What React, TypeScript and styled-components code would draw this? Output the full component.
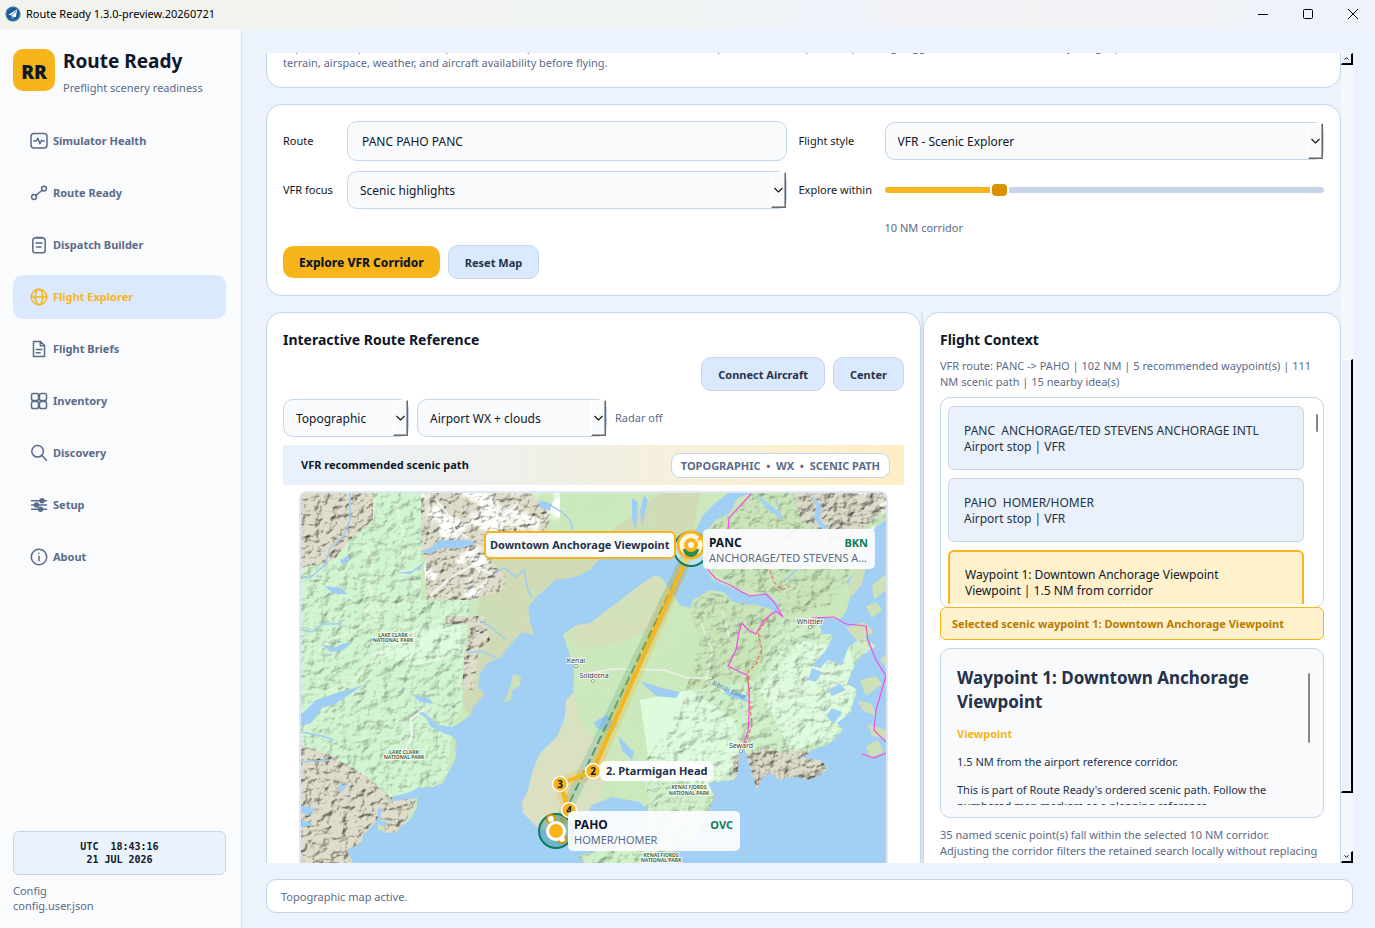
import React, { useState } from "react";
import styled, { createGlobalStyle } from "styled-components";

const amber = "#f7b51b";
const ink = "#0f1729";
const slate = "#24324a";
const muted = "#5b6b88";
const line = "#c5d5ea";
const canvas = "#ecf3fc";
const soft = "#dbe9fe";
const field = "#f9fafc";

const GlobalStyle = createGlobalStyle`
  * { box-sizing: border-box; }
  html, body { margin: 0; height: 100%; }
  body {
    font-family: "Segoe UI", "Noto Sans", "Open Sans", sans-serif;
    font-size: 11px;
    line-height: 16px;
    color: ${ink};
    background: ${canvas};
  }
  button, input, select { font: inherit; color: inherit; }
  h1, h2, h3, p { margin: 0; }
`;

/* ---------- window frame ---------- */

const Window = styled.div`
  display: flex;
  flex-direction: column;
  height: 100vh;
  overflow: hidden;
`;

const TitleBar = styled.header`
  display: flex;
  align-items: center;
  flex: none;
  height: 29px;
  padding: 0 0 2px 5px;
  gap: 5px;
  color: #000;
  background: linear-gradient(90deg, #f3f3ee 0%, #f0f4f1 45%, #eff2f9 60%, #f2f2f5 75%, #eef2fa 100%);
`;

const WindowTitle = styled.span`
  flex: 1;
`;

const WindowControls = styled.div`
  display: flex;
`;

const WindowButton = styled.button`
  display: grid;
  place-items: center;
  width: 45px;
  height: 27px;
  padding: 0;
  border: 0;
  background: none;
`;

const Body = styled.div`
  display: flex;
  flex: 1;
  min-height: 0;
`;

/* ---------- sidebar ---------- */

const Sidebar = styled.aside`
  display: flex;
  flex-direction: column;
  flex: none;
  width: 242px;
  padding: 20px 15px 15px 13px;
  background: #f9fbfd;
  border-right: 1px solid #d9e3f1;
`;

const Brand = styled.div`
  display: flex;
  gap: 8px;
  height: 50px;
`;

const BrandMark = styled.div`
  flex: none;
  width: 42px;
  height: 42px;
  padding-top: 4px;
  border-radius: 10px;
  background: ${amber};
  font-size: 19px;
  line-height: 38px;
  font-weight: 900;
  text-align: center;
`;

const BrandName = styled.h1`
  font-size: 19px;
  line-height: 24px;
  font-weight: 700;
`;

const BrandTag = styled.p`
  margin-top: 7px;
  color: ${muted};
`;

const Nav = styled.nav`
  display: flex;
  flex-direction: column;
  gap: 8px;
  margin-top: 20px;
  flex: 1;
`;

const NavItem = styled.a<{ $active?: boolean }>`
  display: flex;
  align-items: center;
  gap: 5px;
  height: 44px;
  padding: 0 17px;
  border-radius: 10px;
  font-weight: 700;
  line-height: 18px;
  text-decoration: none;
  color: ${(p) => (p.$active ? amber : muted)};
  background: ${(p) => (p.$active ? soft : "transparent")};
`;

const Clock = styled.div`
  height: 44px;
  padding-top: 8px;
  border: 1px solid ${line};
  border-radius: 6px;
  background: #eaf2fc;
  font: 700 10px/13px "DejaVu Sans Mono", monospace;
  text-align: center;
  white-space: pre;
`;

const ConfigNote = styled.p`
  margin-top: 8px;
  line-height: 15px;
  color: ${muted};
`;

/* ---------- main area ---------- */

const Main = styled.main`
  display: flex;
  flex-direction: column;
  flex: 1;
  min-width: 0;
  gap: 16px;
  padding: 24px 22px 15px 24px;
`;

const Viewport = styled.div`
  display: flex;
  flex: 1;
  min-height: 0;
  overflow: hidden;
`;

const Scrolled = styled.div`
  display: flex;
  flex-direction: column;
  flex: 1;
  min-width: 0;
  gap: 16px;
  margin-top: -31px;
`;

const Card = styled.section`
  flex: none;
  min-width: 0;
  padding: 16px;
  border: 1px solid ${line};
  border-radius: 16px;
  background: #fff;
`;

const Muted = styled.p<{ $gap?: number }>`
  margin-top: ${(p) => p.$gap ?? 0}px;
  color: ${muted};
`;

const FormGrid = styled.form`
  display: grid;
  grid-template-columns: 52px minmax(0, 1fr) 74px minmax(0, 1fr);
  column-gap: 12px;
  row-gap: 10px;
  align-items: center;
  white-space: nowrap;
`;

const TextField = styled.input`
  width: 100%;
  height: 40px;
  padding: 0 14px;
  border: 1px solid ${line};
  border-radius: 10px;
  background: ${field};
  font-size: 12px;
`;

const SelectShell = styled.span<{ $width?: number }>`
  position: relative;
  display: block;
  flex: none;
  width: ${(p) => (p.$width ? `${p.$width}px` : "100%")};
  height: 38px;
`;

const SelectBox = styled.select`
  appearance: none;
  width: 100%;
  height: 38px;
  padding: 2px 20px 0 12px;
  border: 1px solid ${line};
  border-radius: 10px;
  background: ${field};
  font-size: 12px;
`;

const SelectArrow = styled.span`
  position: absolute;
  top: 1px;
  right: 1px;
  bottom: 1px;
  width: 15px;
  display: grid;
  place-items: center;
  pointer-events: none;
  background: ${field};
  border-style: solid;
  border-width: 1px;
  border-color: #fff #696969 #696969 #fff;
  box-shadow: inset -1px -1px 0 #a8a8a8;
`;

const Range = styled.input`
  appearance: none;
  width: 100%;
  height: 16px;
  margin: 0;
  background: transparent;
  &::-webkit-slider-runnable-track {
    height: 6px;
    border-radius: 3px;
    background: linear-gradient(90deg, ${amber} 25%, #c7d5e8 25%);
  }
  &::-webkit-slider-thumb {
    appearance: none;
    width: 19px;
    height: 16px;
    margin-top: -5px;
    border: 2px solid #fff;
    border-radius: 6px;
    background: #d99100;
  }
`;

const RangeValue = styled.output`
  grid-column: 4;
  line-height: 18px;
  color: ${muted};
`;

const Actions = styled.div<{ $end?: boolean }>`
  display: flex;
  align-items: center;
  gap: 8px;
  justify-content: ${(p) => (p.$end ? "flex-end" : "flex-start")};
  margin-top: 8px;
`;

const Button = styled.button<{ $primary?: boolean }>`
  height: ${(p) => (p.$primary ? 32 : 34)}px;
  padding: 1px 16px 0;
  border: ${(p) => (p.$primary ? "0" : `1px solid ${line}`)};
  border-radius: 10px;
  background: ${(p) => (p.$primary ? amber : soft)};
  color: ${(p) => (p.$primary ? ink : slate)};
  font-size: ${(p) => (p.$primary ? 12 : 11)}px;
  font-weight: ${(p) => (p.$primary ? 800 : 700)};
  white-space: nowrap;
`;

const Split = styled.div`
  display: grid;
  flex: none;
  grid-template-columns: minmax(0, 655fr) minmax(0, 418fr);
  gap: 2px;
  background: linear-gradient(#d9e3f1, #d9e3f1) 61% 0 / 2px 100% no-repeat;
`;

const PanelTitle = styled.h2`
  padding-top: 1px;
  font-size: 14px;
  line-height: 19px;
  font-weight: 700;
`;

const Banner = styled.div`
  display: flex;
  align-items: center;
  justify-content: space-between;
  height: 40px;
  margin-top: 8px;
  padding: 0 14px 0 18px;
  background: linear-gradient(90deg, #e9f1fd, #f1f0e6 45%, #ffeec6);
  font-weight: 700;
`;

const Chip = styled.span`
  height: 25px;
  padding: 0 9px;
  border: 1px solid ${line};
  border-radius: 9px;
  background: #fff;
  color: ${muted};
  line-height: 24px;
  white-space: pre;
`;

/* ---------- map ---------- */

const MapFrame = styled.div`
  position: relative;
  margin: 6px 16px 0;
  aspect-ratio: 589 / 404;
  border: 2px solid #dde7f5;
  border-radius: 8px 8px 0 0;
`;

const MapArt = styled.svg`
  display: block;
  width: 100%;
  height: 100%;
`;

const Relief = styled.rect`
  mix-blend-mode: multiply;
`;

const MapLabel = styled.div<{ $kind: "selected" | "plain" }>`
  position: absolute;
  height: ${(p) => (p.$kind === "selected" ? 28 : 20)}px;
  padding: 0 ${(p) => (p.$kind === "selected" ? 4 : 6)}px;
  border: ${(p) => (p.$kind === "selected" ? `2px solid ${amber}` : "0")};
  border-radius: 6px;
  background: rgba(253, 254, 255, 0.96);
  line-height: ${(p) => (p.$kind === "selected" ? 24 : 20)}px;
  font-weight: 700;
  white-space: nowrap;
  color: ${slate};
`;

const AirportLabel = styled.div`
  position: absolute;
  width: 172px;
  height: 40px;
  padding: 6px 7px 0 6px;
  border-radius: 5px;
  background: rgba(252, 253, 255, 0.93);
  line-height: 16px;
`;

const AirportHead = styled.div`
  display: flex;
  justify-content: space-between;
  font-size: 12px;
  line-height: 15px;
  font-weight: 700;
`;

const Sky = styled.span`
  font-size: 11px;
  color: #0c7c5c;
`;

const AirportName = styled.div`
  overflow: hidden;
  text-overflow: ellipsis;
  white-space: nowrap;
  color: ${muted};
`;

/* ---------- context panel ---------- */

const StopList = styled.div`
  position: relative;
  height: 211px;
  margin-top: 7px;
  padding: 8px 19px 3px 7px;
  border: 1px solid ${line};
  border-radius: 10px;
`;

const StopClip = styled.ul`
  display: flex;
  flex-direction: column;
  gap: 8px;
  height: 198px;
  margin: 0;
  padding: 0;
  overflow: hidden;
  list-style: none;
`;

const Stop = styled.li<{ $selected?: boolean }>`
  flex: none;
  height: 64px;
  padding: ${(p) => (p.$selected ? 15 : 16)}px 15px 0;
  border: ${(p) => (p.$selected ? `2px solid ${amber}` : `1px solid ${line}`)};
  border-radius: 6px;
  background: ${(p) => (p.$selected ? "#fff1cc" : "#eaf1fb")};
  color: ${(p) => (p.$selected ? ink : slate)};
  font-size: 12px;
  white-space: pre;
`;

const ThinBar = styled.span<{ $top: number; $right: number; $height: number }>`
  position: absolute;
  top: ${(p) => p.$top}px;
  right: ${(p) => p.$right}px;
  width: 2px;
  height: ${(p) => p.$height}px;
  border-radius: 1px;
  background: #868788;
`;

const SelectedNote = styled.p`
  position: relative;
  height: 33px;
  margin-top: -1px;
  padding: 0 11px;
  border: 1px solid ${amber};
  border-radius: 6px;
  background: #fff1cc;
  color: #b87a00;
  line-height: 31px;
  font-weight: 700;
  white-space: nowrap;
`;

const Detail = styled.article`
  position: relative;
  height: 170px;
  margin-top: 8px;
  padding: 17px 32px 12px 16px;
  border: 1px solid ${line};
  border-radius: 10px;
  background: ${field};
  color: ${slate};
`;

const DetailClip = styled.div`
  height: 139px;
  overflow: hidden;
`;

const DetailTitle = styled.h3`
  font-size: 17px;
  line-height: 24px;
  font-weight: 700;
`;

const DetailText = styled.p<{ $accent?: boolean }>`
  margin-top: 12px;
  font-weight: ${(p) => (p.$accent ? 700 : 400)};
  color: ${(p) => (p.$accent ? amber : "inherit")};
`;

const StatusBar = styled.footer`
  flex: none;
  height: 34px;
  padding: 0 14px;
  border: 1px solid ${line};
  border-radius: 10px;
  background: #fff;
  color: ${muted};
  line-height: 34px;
`;

/* ---------- main scroll bar ---------- */

const ScrollBar = styled.div`
  display: flex;
  flex-direction: column;
  flex: none;
  width: 12px;
  background: repeating-conic-gradient(#fff 0 25%, #e9f1fb 0 50%) 0 0 / 2px 2px;
`;

const ScrollButton = styled.button`
  display: grid;
  place-items: center;
  width: 12px;
  height: 12px;
  padding: 0;
  background: ${canvas};
  border-style: solid;
  border-width: 1px 2px 2px 1px;
  border-color: #fff #000 #000 #fff;
`;

const ScrollThumb = styled.div`
  flex: 433;
  background: ${canvas};
  border-style: solid;
  border-width: 1px 2px 2px 1px;
  border-color: #fff #000 #000 #fff;
`;

const ScrollGap = styled.div<{ $weight: number }>`
  flex: ${(p) => p.$weight};
`;

/* ---------- icons ---------- */

const NavIcon = ({ name }: { name: string }) => (
  <svg width="18" height="18" viewBox="0 0 18 18" fill="none" stroke="currentColor" strokeWidth="1.5" strokeLinecap="round" strokeLinejoin="round" aria-hidden>
    {name === "health" && (
      <>
        <rect x="1" y="1.5" width="16" height="14.5" rx="3" />
        <path d="M3.8 9h2.6l1.5-2.8 2 5.6 1.7-3.6.8.8h1.8" />
      </>
    )}
    {name === "route" && (
      <>
        <circle cx="4" cy="13" r="2.4" />
        <circle cx="14" cy="4.6" r="2.4" />
        <path d="M5.9 11.4 12.1 6.200" />
      </>
    )}
    {name === "dispatch" && (
      <>
        <rect x="2.800" y="2" width="12.400" height="14.800" rx="2.600" />
        <path d="M6 1.500h6M6 7h6M6.500 11h4.500" />
      </>
    )}
    {name === "globe" && (
      <>
        <circle cx="9" cy="9" r="7.700" />
        <ellipse cx="9" cy="9" rx="3.700" ry="7.700" />
        <path d="M1.300 9h15.400" />
      </>
    )}
    {name === "brief" && (
      <>
        <path d="M3.500 1.500h7l4 4v11h-11zM10.300 1.700v4h4" />
        <path d="M6.200 9.500h5.600M6.200 12.800h4" />
      </>
    )}
    {name === "inventory" && (
      <>
        <rect x="1.500" y="1.500" width="7" height="7" rx="1.800" />
        <rect x="9.500" y="1.500" width="7" height="7" rx="1.800" />
        <rect x="1.500" y="9.500" width="7" height="7" rx="1.800" />
        <rect x="9.500" y="9.500" width="7" height="7" rx="1.800" />
      </>
    )}
    {name === "search" && (
      <>
        <circle cx="7.600" cy="7.300" r="5.800" />
        <path d="M12 11.800l4.500 4.500" />
      </>
    )}
    {name === "setup" && (
      <>
        <path d="M1.500 4.800h15M1.500 9h15M1.500 13.200h15" />
        <g fill="currentColor">
          <circle cx="12" cy="4.800" r="2" />
          <circle cx="6.500" cy="9" r="2" />
          <circle cx="10.500" cy="13.200" r="2" />
        </g>
      </>
    )}
    {name === "about" && (
      <>
        <circle cx="9" cy="9" r="7.700" />
        <path d="M9 8.200v4.600M9 5.200v.2" />
      </>
    )}
  </svg>
);

const AppLogo = () => (
  <svg width="16" height="16" viewBox="0 0 16 16" aria-hidden>
    <circle cx="8" cy="8" r="7.500" fill="#1c5d99" />
    <circle cx="8" cy="8" r="6.800" fill="none" stroke="#3f8cc4" strokeWidth=".8" />
    <path d="M12.200 3.200 3.400 8.700l3 .8L7.200 12.900l1.700-2.200 1.900.6z" fill="#fff" />
    <path d="M11.400 4.600 6.900 9.500 7.300 12" fill="none" stroke="#1c5d99" strokeWidth=".8" />
  </svg>
);

const Chevron = () => (
  <svg width="11" height="7" viewBox="0 0 11 7" fill="none" stroke="#111" strokeWidth="1.100" aria-hidden>
    <path d="M1.500 1 5.500 5 9.500 1" />
  </svg>
);

/* ---------- form pieces ---------- */

const Select = ({ id, label, options, width }: { id: string; label?: string; options: string[]; width?: number }) => (
  <SelectShell $width={width}>
    <SelectBox id={id} aria-label={label}>
      {options.map((o) => (
        <option key={o}>{o}</option>
      ))}
    </SelectBox>
    <SelectArrow>
      <Chevron />
    </SelectArrow>
  </SelectShell>
);

/* ---------- map drawing ---------- */

const MAINLAND =
  "M301 493H728L713 505 703 515 697 528 680 545 640 550 600 558 590 570 580 575 566 579 555 580 545 590 535 598 528 608 530 622 534 635 522 632 510 645 500 658 487 663 480 673 478 687 485 694 473 707 471 714 460 723 452 727 438 725 428 716 424 712 418 713 426 718 430 726 443 733 452 736 455 746 456 757 452 766 448 773 443 783 433 787 417 788 410 792 393 797 390 802 400 800 417 798 417 807 410 820 400 827 397 832 387 833 382 828 388 823 380 820 382 807 377 810 378 818 375 823 363 835 362 843 347 850 353 863 360 893H301Z";
const KENAI =
  "M783 617 770 609 757 605 733 602 723 592 710 590 693 600 690 608 680 605 672 593 662 578 655 575 633 590 623 598 610 608 590 623 577 625 563 634 568 650 574 667 573 693 566 700 565 717 557 737 540 753 533 770 528 790 522 803 523 813 537 827 560 838 580 828 592 805 612 797 640 802 650 812 625 835 600 850 577 856 590 868 620 893 640 878 660 855 690 845 705 820 715 797 708 783 733 780 737 777 740 753 744 748 750 767 757 790 763 777 770 773 780 780 790 777 797 777 807 780 820 776 828 768 820 760 803 758 812 750 830 743 843 730 837 723 850 713 857 690 847 683 857 660 870 650 886 640V493H750L737 499 730 513 716 520 705 533 704 566 713 580 730 587 750 596 767 593 777 603Z";
const SOUND = [
  "M817 617 840 619 846 612 852 590 846 582 855 570 862 545 876 527 886 520V640L876 646 862 636 848 648 842 665 828 660 820 668 812 666 826 650 834 634 822 634Z",
  "M886 640 870 650 862 662 850 672 858 682 866 700 852 715 846 734 838 745 836 760 850 768 866 790H886Z",
  "M812 668 822 672 816 682 808 680ZM846 690 832 696 828 690 840 684ZM832 708 842 712 834 724 826 716Z",
  "M756 493 768 503 778 512 782 522 776 515 766 508ZM812 493 822 508 820 520 828 528 822 530 814 518 816 506Z",
];
const ISLETS = [
  "M858 560 866 566 862 584 852 596 848 586ZM872 585 886 574V590L874 600ZM866 606 876 602 882 610 872 618ZM846 628 864 622 874 632 858 642ZM860 680 876 676 882 684 866 696ZM858 700 872 704 876 716 862 710ZM868 724 886 730V738L872 736ZM866 746 878 740 884 752 870 758ZM880 660 886 654V668Z",
  "M513 674 521 677 520 685 512 691 511 700 502 703 506 698 511 684ZM452 736 456 741 457 748 452 744ZM378 824 384 827 386 832 378 830Z",
];
const PEAKS = [
  "M301 493H373V520L350 540 334 560 301 568Z",
  "M421 493H530L550 515 545 550 490 560 508 580 500 592 470 600H426V555H421Z",
  "M446 616H484L490 640 478 655 474 690 462 690 464 660 470 625 446 624Z",
  "M301 745 330 755 366 776 390 797 417 798 400 833 347 850 353 863 360 893H301Z",
  "M733 756 757 752 765 747 785 754 800 749 828 762 820 785 790 785 757 795 733 790Z",
  "M795 493H886V510L860 530 830 535 800 520Z",
];
const CHUGACH = [
  "M750 493H886V520L862 545 846 582 826 610 783 617 767 593 740 590 704 566 705 533Z",
  "M704 590 757 605 783 617 812 630 790 660 755 680 770 745 760 765 740 752 735 700 700 712 686 690 700 640 690 610Z",
];
const EAST_COAST = "M780 620H886V790H740L690 850 600 893 577 856 650 800 640 770 690 690 755 680Z";
const PARK =
  "M373 493H421V600H470L464 660 462 706 452 727 448 773 433 787 390 797 366 776 301 745V568L334 560 350 540 373 520Z";

const TopoMap = () => (
  <MapArt viewBox="301 493 585 400" preserveAspectRatio="none" role="img" aria-label="Topographic map of the Kenai Peninsula with the scenic path">
    <defs>
      <filter id="relief" x="0" y="0" width="100%" height="100%" colorInterpolationFilters="sRGB">
        <feTurbulence type="fractalNoise" baseFrequency="0.11 0.13" numOctaves="4" seed="11" />
        <feDiffuseLighting surfaceScale="2.900" diffuseConstant="1.240" lightingColor="#fffefa">
          <feDistantLight azimuth="225" elevation="57" />
        </feDiffuseLighting>
      </filter>
      <filter id="reliefSoft" x="0" y="0" width="100%" height="100%" colorInterpolationFilters="sRGB">
        <feTurbulence type="fractalNoise" baseFrequency="0.080 0.095" numOctaves="4" seed="4" />
        <feDiffuseLighting surfaceScale="1.900" diffuseConstant="1.150" lightingColor="#ffffff">
          <feDistantLight azimuth="225" elevation="60" />
        </feDiffuseLighting>
      </filter>
      <filter id="snow" x="0" y="0" width="100%" height="100%">
        <feTurbulence type="fractalNoise" baseFrequency="0.030" numOctaves="3" seed="8" />
        <feColorMatrix values="0 0 0 0 1  0 0 0 0 1  0 0 0 0 .98  9 0 0 0 -4.700" />
      </filter>
      <filter id="forest" x="0" y="0" width="100%" height="100%">
        <feTurbulence type="fractalNoise" baseFrequency="0.022" numOctaves="4" seed="21" />
        <feColorMatrix values="0 0 0 0 .62  0 0 0 0 .8  0 0 0 0 .5  0 8 0 0 -4" />
      </filter>
      <clipPath id="land">
        <path d={MAINLAND} />
        <path d={KENAI} />
      </clipPath>
      <clipPath id="peaks">
        {PEAKS.map((d) => (
          <path key={d} d={d} />
        ))}
      </clipPath>
      <clipPath id="hills">
        <path d={PARK} />
        {CHUGACH.map((d) => (
          <path key={d} d={d} />
        ))}
        <path d={EAST_COAST} />
      </clipPath>
      <clipPath id="snowy">
        <path d="M421 493H560V530L500 560 475 600H426ZM840 493H886V530H850Z" />
      </clipPath>
    </defs>

    <path fill="#a2d0f5" d="M301 493H886V893H301Z" />
    <g clipPath="url(#land)">
      <path fill="#cbe9bd" d="M301 493H886V893H301Z" />
      <path fill="#d0dab4" d="M486 560 600 540 660 493H700L690 550 530 640 470 720 462 700Z" />
      <path fill="#dce0c2" d="M520 700 573 690 580 720 610 760 600 800 560 840 520 820Z" />
      <path fill="#d5dfba" d="M590 610 655 572 672 593 665 620 630 640 590 650 563 640Z" />
      <rect x="301" y="493" width="585" height="400" filter="url(#forest)" opacity=".25" />
      <path fill="#d2f5d1" d={PARK} />
      <path fill="#c9e5ba" d={CHUGACH.join("")} />
      <path fill="#d0f0c9" d={EAST_COAST} />
      <path fill="#dffbdd" d="M760 690 800 640 850 650 860 700 830 740 790 750ZM640 700 690 690 735 720 740 760 710 790 650 770ZM395 640 460 620 462 655 420 665 370 655Z" />
      <path fill="#deddcc" d={PEAKS.join("")} />
      <g clipPath="url(#snowy)">
        <rect x="301" y="493" width="585" height="400" filter="url(#snow)" />
      </g>
      <g fill="none" stroke="#eaf7e2" strokeWidth="2" opacity=".7">
        <path d="M362 540 372 560 368 585 380 612 410 600 406 625 390 640 376 620 372 605 360 618" />
        <path d="M395 500 405 540 400 570 420 590" />
        <path d="M330 690 355 680 372 660 395 640 440 620 460 600" />
        <path d="M310 660 330 640 352 632 370 622" />
        <path d="M700 620 712 650 706 680M722 610 730 640M790 640 770 670 776 710 790 730M820 690 800 700 780 690" />
      </g>
      <Relief x="301" y="493" width="585" height="400" filter="url(#reliefSoft)" clipPath="url(#hills)" />
      <Relief x="301" y="493" width="585" height="400" filter="url(#relief)" clipPath="url(#peaks)" />
      <g fill="none" stroke="#f3f7ee" strokeWidth="2.500" opacity=".85" strokeLinejoin="round">
        <path d="M436 500 446 512 455 530 468 538" />
        <path d="M485 502 500 510 512 525 534 520" />
        <path d="M430 596 450 578 472 566 492 574" />
        <path d="M405 750 412 735 410 720 425 708" />
      </g>
    </g>

    <g fill="#a2d0f5">
      {SOUND.map((d) => (
        <path key={d} d={d} />
      ))}
    </g>
    <g fill="#cde0b8">
      {ISLETS.map((d) => (
        <path key={d} d={d} />
      ))}
    </g>

    <g fill="#9fcdf3">
      <path d="M396 573 412 571 424 562 430 554 420 552 430 548 440 540 470 540 476 544 462 548 440 548 428 556 422 566 410 574Z" />
      <path d="M301 715 316 700 340 692 362 686 350 694 335 704 322 708 312 722 301 727Z" />
      <path d="M324 586 340 588 348 594 334 594ZM340 560 349 556 350 560 342 564ZM322 644 334 648 342 644 352 642 344 650 330 652Z" />
      <path d="M540 500 552 504 550 511 540 508ZM412 694 430 699 433 704 420 702ZM301 806 316 808 308 816 301 812ZM302 820 314 824 302 828ZM338 786 348 784 340 794Z" />
      <path d="M640 681 662 688 680 692 676 698 656 696ZM594 722 606 715 618 724 612 732 596 728ZM618 736 634 752 632 760 622 750ZM718 680 724 690 746 696 748 702 728 696Z" />
      <path d="M632 498 638 502 636 530 632 520ZM644 495 648 500 642 526 640 510ZM470 590 474 584 468 594ZM716 588 730 590 728 594Z" />
    </g>
    <g fill="none" stroke="#9fcdf3" strokeWidth="1.500">
      <path d="M350 493 350 520 344 535 330 548 325 565 310 578 301 576" />
      <path d="M301 630 312 632 322 624 342 624" />
      <path d="M493 572 505 568 515 577 524 570 528 590 532 598M467 653 482 651 496 658M480 620 492 628 506 640" />
      <path d="M550 505 562 512 570 520 573 530" />
      <path d="M301 732 322 736 334 740M301 762 330 760" />
      <path d="M776 500 782 520M786 580 800 566M864 600 850 620" />
    </g>

    <path d="M590 673 612 669 664 670 688 678 712 678" fill="none" stroke="#eef0e4" strokeWidth="1.500" />
    <g fill="none" stroke="#f54fe0" strokeWidth="1.200">
      <path d="M751 494 740 506 729 518 728 530 718 545 704 560 708 570 716 579 730 585 742 592 750 596 766 594 774 602 783 617 776 611 764 620 756 634 748 630 742 623 739 632 736 650 728 666 740 672 747 675 749 690 749 715 748 732 743 745" />
      <path d="M812 618 834 617 846 624 866 626 868 640 876 660 886 676 876 710 874 730 886 742M886 753 874 758 862 754" />
    </g>
    <g fill="none" stroke="#ee735c" strokeWidth="1.200" strokeDasharray="4 2">
      <path d="M770 570 774 582 782 590 790 586M768 618 758 632 762 650 756 664 748 672 750 705 752 725 745 745" />
    </g>

    <g fontFamily="Noto Sans, sans-serif" textAnchor="middle" stroke="#fff" strokeWidth="1.500" paintOrder="stroke" fill="#333">
      <g fontSize="7">
        <text x="576" y="663">Kenai</text>
        <text x="594" y="678">Soldotna</text>
        <text x="810" y="624">Whittier</text>
        <text x="741" y="748">Seward</text>
      </g>
      <g fontSize="5" fontWeight="700" fill="#3e6b3c">
        <text x="393" y="637">LAKE CLARK</text>
        <text x="393" y="642">NATIONAL PARK</text>
        <text x="404" y="754">LAKE CLARK</text>
        <text x="404" y="759">NATIONAL PARK</text>
        <text x="689" y="789">KENAI FJORDS</text>
        <text x="689" y="795">NATIONAL PARK</text>
        <text x="661" y="857">KENAI FJORDS</text>
        <text x="661" y="862">NATIONAL PARK</text>
      </g>
      <text x="728" y="692" fontSize="7" fill="#3b86c8" stroke="none" transform="rotate(24 728 692)">
        Kenai Lake
      </text>
      <g fill="#fff" stroke="#555" strokeWidth="1">
        <circle cx="576" cy="666" r="1.500" />
        <circle cx="810" cy="627" r="1.500" />
        <circle cx="593" cy="681" r="1.200" />
        <circle cx="741" cy="751" r="1.200" />
      </g>
    </g>

    <g fill="none" strokeLinejoin="round">
      <path d="M691 548 556 831" stroke="#3f9c86" strokeOpacity=".22" strokeWidth="12" />
      <path d="M691 548 556 831" stroke="#2e8b67" strokeOpacity=".8" strokeWidth="2" strokeDasharray="9 4" />
      <path d="M691 548 593 771 560 784 569 810 556 831" stroke={amber} strokeOpacity=".25" strokeWidth="13" />
      <path d="M691 548 593 771 560 784 569 810 556 831" stroke={amber} strokeWidth="4" />
    </g>

    <g>
      <circle cx="691" cy="549" r="17" fill="#fff" fillOpacity=".35" stroke="#0c7c5c" strokeWidth="2" />
      <circle cx="691" cy="545" r="13" fill="#fff6dc" stroke={amber} strokeWidth="3" />
      <path d="M683 549a8 8 0 0 0 16 0z" fill="#2e8b45" />
      <circle cx="691" cy="545" r="5" fill="#fff" stroke={amber} strokeWidth="4" />
      <path d="M698 540 703 536" stroke={amber} strokeWidth="3" />
    </g>
    <g>
      <circle cx="556" cy="831" r="17" fill="#2a8a90" fillOpacity=".4" stroke="#0c7c5c" strokeWidth="2" />
      <circle cx="551" cy="819" r="4" fill="#fff" stroke="#d99100" strokeWidth="2" />
      <circle cx="562" cy="839" r="4" fill="#fff" stroke="#d99100" strokeWidth="2" />
      <circle cx="556" cy="831" r="8.500" fill={amber} stroke="#fff" strokeWidth="3" />
    </g>
    {[
      [593, 771, "2"],
      [560, 784, "3"],
      [569, 810, "4"],
    ].map(([x, y, n]) => (
      <g key={n}>
        <circle cx={x} cy={y} r="7.500" fill={amber} stroke="#fff" strokeWidth="1.500" />
        <text x={x} y={Number(y) + 4} textAnchor="middle" fontSize="10" fontWeight="700" fill={ink}>
          {n}
        </text>
      </g>
    ))}
  </MapArt>
);

const at = (x: number, y: number) => ({ left: `${((x - 301) / 585) * 100}%`, top: `${((y - 493) / 400) * 100}%` });

const airports = [
  { code: "PANC", name: "ANCHORAGE/TED STEVENS ANCHORAGE INTL", sky: "BKN", x: 703, y: 529 },
  { code: "PAHO", name: "HOMER/HOMER", sky: "OVC", x: 568, y: 811 },
];

const navItems = [
  ["Simulator Health", "health"],
  ["Route Ready", "route"],
  ["Dispatch Builder", "dispatch"],
  ["Flight Explorer", "globe"],
  ["Flight Briefs", "brief"],
  ["Inventory", "inventory"],
  ["Discovery", "search"],
  ["Setup", "setup"],
  ["About", "about"],
];

export default function App() {
  const [route, setRoute] = useState("PANC PAHO PANC");
  return (
    <Window>
      <GlobalStyle />
      <TitleBar>
        <AppLogo />
        <WindowTitle>Route Ready 1.3.0-preview.20260721</WindowTitle>
        <WindowControls>
          <WindowButton aria-label="Minimize">
            <svg width="10" height="10" stroke="#000"><path d="M0 5.500h10" /></svg>
          </WindowButton>
          <WindowButton aria-label="Maximize">
            <svg width="10" height="10" fill="none" stroke="#000"><rect x=".5" y=".5" width="9" height="9" rx="1" /></svg>
          </WindowButton>
          <WindowButton aria-label="Close">
            <svg width="10" height="10" stroke="#000"><path d="M0 0 10 10M10 0 0 10" /></svg>
          </WindowButton>
        </WindowControls>
      </TitleBar>
      <Body>
        <Sidebar>
          <Brand>
            <BrandMark>RR</BrandMark>
            <div>
              <BrandName>Route Ready</BrandName>
              <BrandTag>Preflight scenery readiness</BrandTag>
            </div>
          </Brand>
          <Nav>
            {navItems.map(([label, icon]) => (
              <NavItem key={label} href="#" $active={icon === "globe"}>
                <NavIcon name={icon} />
                {label}
              </NavItem>
            ))}
          </Nav>
          <Clock>{"UTC  18:43:16\n21 JUL 2026"}</Clock>
          <ConfigNote>
            Config
            <br />
            config.user.json
          </ConfigNote>
        </Sidebar>

        <Main>
          <Viewport>
            <Scrolled>
              <Card>
                <Muted>
                  Explore the airports and scenic points near the planned route on a live reference map. These are independent planning suggestions; check current safety, range, performance, and all charts,
                  <br />
                  terrain, airspace, weather, and aircraft availability before flying.
                </Muted>
              </Card>

              <Card>
                <FormGrid>
                  <label htmlFor="route">Route</label>
                  <TextField id="route" value={route} onChange={(e) => setRoute(e.target.value)} />
                  <label htmlFor="style">Flight style</label>
                  <Select id="style" options={["VFR - Scenic Explorer"]} />
                  <label htmlFor="focus">VFR focus</label>
                  <Select id="focus" options={["Scenic highlights"]} />
                  <label htmlFor="within">Explore within</label>
                  <Range id="within" type="range" min={0} max={40} defaultValue={10} />
                  <RangeValue htmlFor="within">10 NM corridor</RangeValue>
                </FormGrid>
                <Actions>
                  <Button $primary>Explore VFR Corridor</Button>
                  <Button>Reset Map</Button>
                </Actions>
              </Card>

              <Split>
                <Card>
                  <PanelTitle>Interactive Route Reference</PanelTitle>
                  <Actions $end>
                    <Button>Connect Aircraft</Button>
                    <Button>Center</Button>
                  </Actions>
                  <Actions>
                    <Select id="layer" label="Map layer" width={126} options={["Topographic"]} />
                    <Select id="overlay" label="Weather overlay" width={190} options={["Airport WX + clouds"]} />
                    <Muted>Radar off</Muted>
                  </Actions>
                  <Banner>
                    VFR recommended scenic path
                    <Chip>{"TOPOGRAPHIC  •  WX  •  SCENIC PATH"}</Chip>
                  </Banner>
                  <MapFrame>
                    <TopoMap />
                    <MapLabel $kind="selected" style={at(484, 531)}>
                      Downtown Anchorage Viewpoint
                    </MapLabel>
                    <MapLabel $kind="plain" style={at(600, 761)}>
                      2. Ptarmigan Head
                    </MapLabel>
                    {airports.map((a) => (
                      <AirportLabel key={a.code} style={at(a.x, a.y)}>
                        <AirportHead>
                          {a.code}
                          <Sky>{a.sky}</Sky>
                        </AirportHead>
                        <AirportName>{a.name}</AirportName>
                      </AirportLabel>
                    ))}
                  </MapFrame>
                </Card>

                <Card>
                  <PanelTitle>Flight Context</PanelTitle>
                  <Muted $gap={9}>
                    VFR route: PANC -&gt; PAHO | 102 NM | 5 recommended waypoint(s) | 111 NM scenic path | 15 nearby idea(s)
                  </Muted>
                  <StopList>
                    <StopClip>
                      <Stop>{"PANC  ANCHORAGE/TED STEVENS ANCHORAGE INTL\nAirport stop | VFR"}</Stop>
                      <Stop>{"PAHO  HOMER/HOMER\nAirport stop | VFR"}</Stop>
                      <Stop $selected>{"Waypoint 1: Downtown Anchorage Viewpoint\nViewpoint | 1.5 NM from corridor"}</Stop>
                    </StopClip>
                    <ThinBar $top={16} $right={5} $height={18} />
                  </StopList>
                  <SelectedNote>Selected scenic waypoint 1: Downtown Anchorage Viewpoint</SelectedNote>
                  <Detail>
                    <DetailClip>
                      <DetailTitle>Waypoint 1: Downtown Anchorage Viewpoint</DetailTitle>
                      <DetailText $accent>Viewpoint</DetailText>
                      <DetailText>1.5 NM from the airport reference corridor.</DetailText>
                      <DetailText>
                        This is part of Route Ready's ordered scenic path. Follow the numbered map markers as a planning reference.
                      </DetailText>
                    </DetailClip>
                    <ThinBar $top={24} $right={13} $height={70} />
                  </Detail>
                  <Muted $gap={9}>
                    35 named scenic point(s) fall within the selected 10 NM corridor.
                    <br />
                    Adjusting the corridor filters the retained search locally without replacing
                    <br />
                    the route.
                  </Muted>
                </Card>
              </Split>
            </Scrolled>

            <ScrollBar>
              <ScrollButton aria-label="Scroll up">
                <svg width="5" height="3" fill="none" stroke="#111"><path d="M.5 2.500 2.500.800 4.500 2.500" /></svg>
              </ScrollButton>
              <ScrollGap $weight={295} />
              <ScrollThumb />
              <ScrollGap $weight={58} />
              <ScrollButton aria-label="Scroll down">
                <svg width="5" height="3" fill="none" stroke="#111"><path d="M.5.500 2.500 2.200 4.500.500" /></svg>
              </ScrollButton>
            </ScrollBar>
          </Viewport>
          <StatusBar>Topographic map active.</StatusBar>
        </Main>
      </Body>
    </Window>
  );
}
